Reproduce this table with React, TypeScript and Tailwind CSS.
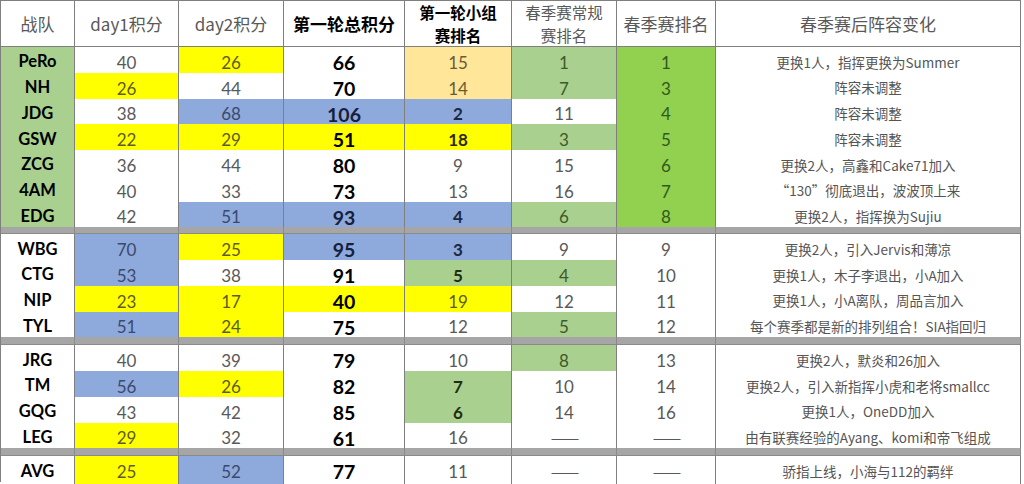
type Tone = "w" | "y" | "b" | "g" | "o" | "lg";

type Row = {
  team: string;
  teamBg: boolean;
  cells: [string, Tone][]; // day1, day2, total, group, regular, spring
  groupBold: boolean;
  note: string;
};

const bgClass: Record<Tone, string> = {
  w: "bg-white",
  y: "bg-[#ffff00]",
  b: "bg-[#8ea9db]",
  g: "bg-[#a9d08e]",
  o: "bg-[#ffe699]",
  lg: "bg-[#92d050]",
};

const textClass: Record<Tone, string> = {
  w: "text-[#595959]",
  y: "text-[#5c5c28]",
  b: "text-[#3b4a6b]",
  g: "text-[#3d5a2c]",
  o: "text-[#6a5a35]",
  lg: "text-[#2f5a1c]",
};

const rows: Row[][] = [
  [
    { team: "PeRo", teamBg: true, cells: [["40", "w"], ["26", "y"], ["66", "w"], ["15", "o"], ["1", "g"], ["1", "lg"]], groupBold: false, note: "更换1人，指挥更换为Summer" },
    { team: "NH", teamBg: true, cells: [["26", "y"], ["44", "w"], ["70", "w"], ["14", "o"], ["7", "g"], ["3", "lg"]], groupBold: false, note: "阵容未调整" },
    { team: "JDG", teamBg: true, cells: [["38", "w"], ["68", "b"], ["106", "b"], ["2", "b"], ["11", "w"], ["4", "lg"]], groupBold: true, note: "阵容未调整" },
    { team: "GSW", teamBg: true, cells: [["22", "y"], ["29", "y"], ["51", "y"], ["18", "y"], ["3", "g"], ["5", "lg"]], groupBold: true, note: "阵容未调整" },
    { team: "ZCG", teamBg: true, cells: [["36", "w"], ["44", "w"], ["80", "w"], ["9", "w"], ["15", "w"], ["6", "lg"]], groupBold: false, note: "更换2人，高鑫和Cake71加入" },
    { team: "4AM", teamBg: true, cells: [["40", "w"], ["33", "w"], ["73", "w"], ["13", "w"], ["16", "w"], ["7", "lg"]], groupBold: false, note: "“130”彻底退出，波波顶上来" },
    { team: "EDG", teamBg: true, cells: [["42", "w"], ["51", "b"], ["93", "b"], ["4", "b"], ["6", "g"], ["8", "lg"]], groupBold: true, note: "更换2人，指挥换为Sujiu" },
  ],
  [
    { team: "WBG", teamBg: false, cells: [["70", "b"], ["25", "y"], ["95", "b"], ["3", "b"], ["9", "w"], ["9", "w"]], groupBold: true, note: "更换2人，引入Jervis和薄凉" },
    { team: "CTG", teamBg: false, cells: [["53", "b"], ["38", "w"], ["91", "w"], ["5", "g"], ["4", "g"], ["10", "w"]], groupBold: true, note: "更换1人，木子李退出，小A加入" },
    { team: "NIP", teamBg: false, cells: [["23", "y"], ["17", "y"], ["40", "y"], ["19", "y"], ["12", "w"], ["11", "w"]], groupBold: false, note: "更换1人，小A离队，周品言加入" },
    { team: "TYL", teamBg: false, cells: [["51", "b"], ["24", "y"], ["75", "w"], ["12", "w"], ["5", "g"], ["12", "w"]], groupBold: false, note: "每个赛季都是新的排列组合！SIA指回归" },
  ],
  [
    { team: "JRG", teamBg: false, cells: [["40", "w"], ["39", "w"], ["79", "w"], ["10", "w"], ["8", "g"], ["13", "w"]], groupBold: false, note: "更换2人，默炎和26加入" },
    { team: "TM", teamBg: false, cells: [["56", "b"], ["26", "y"], ["82", "w"], ["7", "g"], ["10", "w"], ["14", "w"]], groupBold: true, note: "更换2人，引入新指挥小虎和老将smallcc" },
    { team: "GQG", teamBg: false, cells: [["43", "w"], ["42", "w"], ["85", "w"], ["6", "g"], ["14", "w"], ["16", "w"]], groupBold: true, note: "更换1人，OneDD加入" },
    { team: "LEG", teamBg: false, cells: [["29", "y"], ["32", "w"], ["61", "w"], ["16", "w"], ["——", "w"], ["——", "w"]], groupBold: false, note: "由有联赛经验的Ayang、komi和帝飞组成" },
  ],
  [
    { team: "AVG", teamBg: false, cells: [["25", "y"], ["52", "b"], ["77", "w"], ["11", "w"], ["——", "w"], ["——", "w"]], groupBold: false, note: "骄指上线，小海与112的羁绊" },
  ],
];

const cols = "grid grid-cols-[74px_104px_105px_121px_107px_105px_99px_305px]";
const cell = "flex items-center justify-center border-r border-b border-[#7f7f7f]";

function Separator({ tall }: { tall: boolean }) {
  return (
    <div className={`${cols} ${tall ? "h-[8px]" : "h-[7px]"}`}>
      {Array.from({ length: 8 }).map((_, i) => (
        <div key={i} className="bg-[#a6a6a6] border-r border-b border-[#8a8a8a]" />
      ))}
    </div>
  );
}

function DataRow({ row }: { row: Row }) {
  return (
    <div className={`${cols} h-[25.75px]`}>
      <div className={`${cell} ${row.teamBg ? "bg-[#a9d08e]" : "bg-white"} text-[16.5px] font-bold text-black`}>
        {row.team}
      </div>
      {row.cells.map(([v, tone], i) => {
        const isTotal = i === 2;
        const isGroupBold = i === 3 && row.groupBold;
        const weight = isTotal
          ? "font-bold text-[19.5px] " + (tone === "b" ? "text-[#16203a]" : "text-black")
          : isGroupBold
          ? "font-bold text-[17px] " + (tone === "b" ? "text-[#1c2742]" : tone === "g" ? "text-[#1e2e14]" : "text-[#2a2a10]")
          : "text-[17px] " + textClass[tone];
        return (
          <div key={i} className={`${cell} ${bgClass[tone]} ${weight}`}>
            {v === "——" ? (
              <span className="font-['Noto_Sans_CJK_SC',sans-serif] text-[17px] tracking-[-2px]">{v}</span>
            ) : (
              <span className="translate-y-[1px]">{v}</span>
            )}
          </div>
        );
      })}
      <div className={`${cell} bg-white text-[13.5px] text-[#555] font-['Noto_Sans_CJK_SC',sans-serif]`}>
        {row.note}
      </div>
    </div>
  );
}

export default function App() {
  return (
    <div className="w-[1024px] h-[484px] bg-white overflow-hidden font-['Lato','Noto_Sans_CJK_SC',sans-serif]">
      <div className="w-[1021px] border-l border-t border-[#7f7f7f]">
        <div className={`${cols} h-[46px] font-['Noto_Sans_CJK_SC',sans-serif] text-[17px]`}>
          <div className={`${cell} bg-white text-[#595959]`}>战队</div>
          <div className={`${cell} bg-white text-[#595959]`}>day1积分</div>
          <div className={`${cell} bg-white text-[#595959]`}>day2积分</div>
          <div className={`${cell} bg-white text-black font-bold`}>第一轮总积分</div>
          <div className={`${cell} flex-col bg-white text-black font-bold text-[15.5px] leading-[22.5px]`}>
            <span>第一轮小组</span>
            <span>赛排名</span>
          </div>
          <div className={`${cell} flex-col bg-white text-[#595959] text-[15.5px] leading-[22.5px]`}>
            <span>春季赛常规</span>
            <span>赛排名</span>
          </div>
          <div className={`${cell} bg-white text-[#595959]`}>春季赛排名</div>
          <div className={`${cell} bg-white text-[#595959]`}>春季赛后阵容变化</div>
        </div>
        {rows.map((group, gi) => (
          <div key={gi}>
            {gi > 0 && <Separator tall={gi > 1} />}
            {group.map((r) => (
              <DataRow key={r.team} row={r} />
            ))}
          </div>
        ))}
      </div>
    </div>
  );
}
